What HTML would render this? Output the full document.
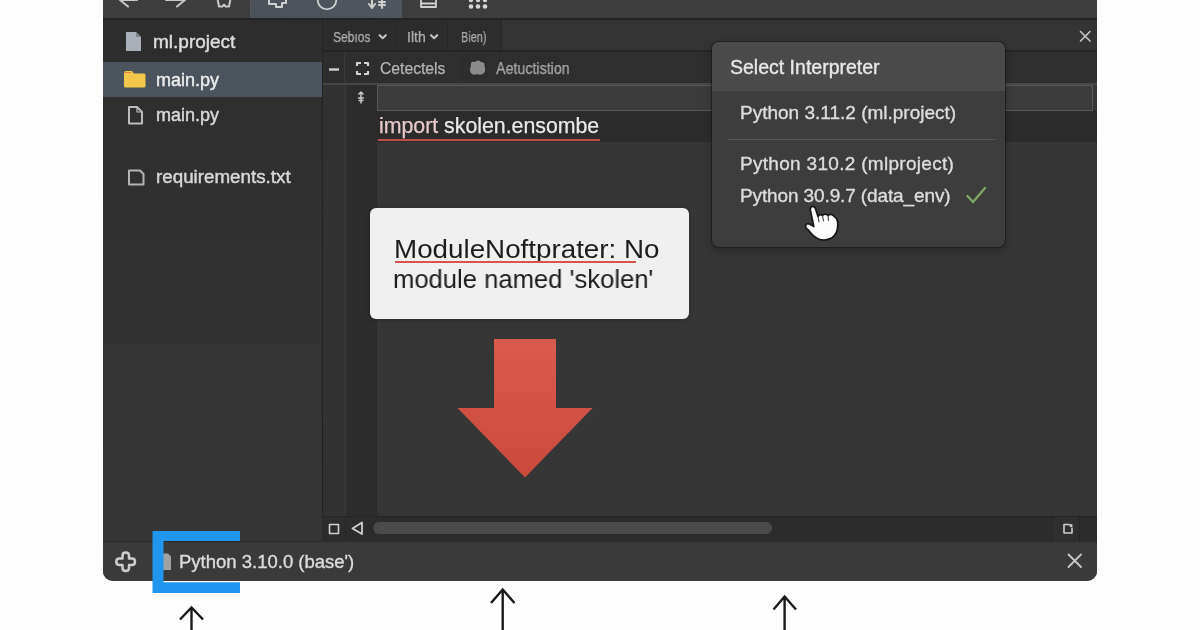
<!DOCTYPE html>
<html><head><meta charset="utf-8">
<style>
*{margin:0;padding:0;box-sizing:border-box}
html,body{width:1200px;height:630px;overflow:hidden;background:#fdfdfd;font-family:"Liberation Sans",sans-serif}
.a{position:absolute}
.t{position:absolute;white-space:nowrap;line-height:1;-webkit-text-stroke:.25px currentColor;will-change:transform}
</style></head><body>
<!-- window body -->
<div class="a" style="left:103px;top:-10px;width:994px;height:591px;background:#303030;border-radius:0 0 10px 10px;overflow:hidden">
  <!-- toolbar -->
  <div class="a" style="left:0;top:0;width:995px;height:29px;background:#3d3d3d"></div>
  <div class="a" style="left:147px;top:0;width:152px;height:29px;background:linear-gradient(90deg,#4b525a,#4f565e)"></div>
  <div class="a" style="left:0;top:28px;width:995px;height:2px;background:#242424"></div>
  <!-- sidebar -->
  <div class="a" style="left:0;top:30px;width:219px;height:521px;background:linear-gradient(#2d2d2d,#313131 40%,#363636)"></div>
  <div class="a" style="left:0;top:72px;width:219px;height:35px;background:#4b535c"></div>
  <div class="a" style="left:219px;top:30px;width:1px;height:521px;background:#232323"></div>
  <!-- tab bar -->
  <div class="a" style="left:220px;top:30px;width:775px;height:31px;background:#343434"></div>
  <div class="a" style="left:220px;top:30px;width:74px;height:31px;background:#2c2c2c;border-right:1px solid #262626"></div>
  <div class="a" style="left:294px;top:30px;width:51px;height:31px;background:#2c2c2c;border-right:1px solid #262626"></div>
  <div class="a" style="left:345px;top:30px;width:54px;height:31px;background:#2d2d2d;border-right:1px solid #262626"></div>
  <div class="a" style="left:220px;top:60px;width:775px;height:2px;background:#242424"></div>
  <!-- editor toolbar -->
  <div class="a" style="left:220px;top:62px;width:775px;height:32px;background:#2e2e2e"></div>
  <div class="a" style="left:220px;top:62px;width:22px;height:32px;background:#2d2d2d;border-right:1px solid #383838"></div>
  <div class="a" style="left:354px;top:63px;width:1px;height:30px;background:#333"></div>
  <div class="a" style="left:220px;top:93px;width:775px;height:2px;background:#474747"></div>
  <!-- gutter -->
  <div class="a" style="left:220px;top:95px;width:22px;height:431px;background:#323232"></div>
  <div class="a" style="left:242px;top:95px;width:1px;height:431px;background:#3a3a3a"></div>
  <div class="a" style="left:243px;top:95px;width:31px;height:431px;background:#2c2c2c"></div>
  <!-- editor area -->
  <div class="a" style="left:274px;top:95px;width:721px;height:431px;background:#363636"></div>
  <div class="a" style="left:274px;top:120px;width:721px;height:32px;background:#2b2b2b"></div>
  <div class="a" style="left:274px;top:95px;width:716px;height:26px;background:#3b3b3b;border:1px solid #585858"></div>
  <!-- scroll row -->
  <div class="a" style="left:219px;top:526px;width:776px;height:25px;background:#2c2c2c;border-top:1px solid #252525"></div>
  <div class="a" style="left:949px;top:527px;width:27px;height:24px;background:#2f2f2f"></div>
  <div class="a" style="left:242px;top:527px;width:1px;height:24px;background:#262626"></div>
  <div class="a" style="left:949px;top:527px;width:1px;height:24px;background:#262626"></div>
  <div class="a" style="left:976px;top:527px;width:1px;height:24px;background:#262626"></div>
  <div class="a" style="left:270px;top:532px;width:399px;height:12px;border-radius:6px;background:#4a4a4a"></div>
  <!-- status bar -->
  <div class="a" style="left:0;top:551px;width:995px;height:40px;background:#3a3a3a;border-top:1px solid #2a2a2a"></div>
</div>

<!-- sidebar texts -->
<div class="t" style="left:153px;top:32px;font-size:19px;color:#dedede;-webkit-text-stroke:.45px #dedede">ml.project</div>
<div class="t" style="left:156px;top:71px;font-size:18px;color:#ebebeb;-webkit-text-stroke:.45px #ebebeb">main.py</div>
<div class="t" style="left:156px;top:106px;font-size:18px;color:#d8d8d8;-webkit-text-stroke:.45px #d8d8d8">main.py</div>
<div class="t" style="left:156px;top:168px;font-size:18.8px;color:#d8d8d8;-webkit-text-stroke:.45px #d8d8d8">requirements.txt</div>

<!-- tab texts -->
<div class="t" style="left:333px;top:30px;font-size:14px;color:#b0b0b0;transform:scaleX(.86);transform-origin:0 0">Sebıos</div>
<div class="t" style="left:407px;top:30px;font-size:14px;color:#b0b0b0">Ilth</div>
<div class="t" style="left:461px;top:30px;font-size:14px;color:#aaaaaa;transform:scaleX(.78);transform-origin:0 0">Bien)</div>
<div class="t" style="left:380px;top:60.5px;font-size:15.7px;color:#b4b4b4">Cetectels</div>
<div class="t" style="left:496px;top:61px;font-size:16px;color:#a8a8a8;transform:scaleX(.89);transform-origin:0 0">Aetuctistion</div>

<!-- code -->
<div class="t" style="left:379px;top:116px;font-size:21.3px;color:#e9e9e9"><span style="color:#e6c9c9">import</span> skolen.ensombe</div>
<div class="a" style="left:378px;top:138.5px;width:222px;height:2.5px;background:#bd4f4a"></div>

<!-- popup -->
<div class="a" style="left:712px;top:42px;width:293px;height:205px;background:#3d3d3d;border-radius:7px;box-shadow:0 0 0 1px rgba(20,20,20,.55),0 3px 8px rgba(0,0,0,.3);overflow:hidden">
  <div class="a" style="left:0;top:0;width:293px;height:49px;background:#4a4a4a"></div>
  <div class="a" style="left:16px;top:97px;width:267px;height:1px;background:#555"></div>
</div>
<div class="t" style="left:730px;top:58px;font-size:19.5px;color:#e8e8e8;-webkit-text-stroke:.35px currentColor">Select Interpreter</div>
<div class="t" style="left:740px;top:103px;font-size:19px;color:#dddddd;-webkit-text-stroke:.35px currentColor">Python 3.11.2 (ml.project)</div>
<div class="t" style="left:740px;top:154px;font-size:19px;color:#dddddd;letter-spacing:.3px;-webkit-text-stroke:.35px currentColor">Python 310.2 (mlproject)</div>
<div class="t" style="left:740px;top:186px;font-size:19px;color:#dddddd;letter-spacing:-.12px;-webkit-text-stroke:.35px currentColor">Python 30.9.7 (data_env)</div>

<!-- tooltip -->
<div class="a" style="left:370px;top:208px;width:319px;height:111px;background:#f0f0f0;border-radius:6px;box-shadow:0 1px 4px rgba(0,0,0,.25)"></div>
<div class="t" style="left:394px;top:236px;font-size:26px;color:#1c1c1c;-webkit-text-stroke:0;transform:scaleX(1.068);transform-origin:0 0">ModuleNoftprater: No</div>
<div class="t" style="left:393px;top:265.5px;font-size:26px;color:#1c1c1c;-webkit-text-stroke:0;transform:scaleX(.985);transform-origin:0 0">module named 'skolen'</div>
<div class="a" style="left:395px;top:261px;width:241px;height:2px;background:#d9534f"></div>

<div class="t" style="left:179px;top:553px;font-size:18.5px;color:#dddddd;-webkit-text-stroke:.35px currentColor">Python 3.10.0 (base')</div>

<!-- icons overlay -->
<svg class="a" style="left:0;top:0" width="1200" height="630" fill="none" stroke-linecap="round" stroke-linejoin="round">
  <!-- toolbar: back / forward / home -->
  <g stroke="#c8c8c8" stroke-width="2">
    <path d="M137,0 H120 M120,0 L128,6.5"/>
    <path d="M166,0 H185 M185,0 L177,6.5"/>
    <path d="M217.5,-1 L219,6.5 H222.3 L224,4.6 L225.7,6.5 H229 L230.5,-1"/>
  </g>
  <line x1="250.5" y1="0" x2="250.5" y2="12" stroke="#5a5a5a" stroke-width="1"/>
  <!-- puzzle -->
  <g stroke="#d0d0d0" stroke-width="2">
    <path d="M269,-2 V4 H276 V7 H282 V3 H286 V-2"/>
  </g>
  <circle cx="327" cy="0" r="9.3" stroke="#cfcfcf" stroke-width="1.8"/>
  <path d="M324,-2 L330,-1" stroke="#888" stroke-width="1"/>
  <!-- arrows -->
  <g stroke="#d0d0d0" stroke-width="2">
    <path d="M372,-2 V8 M369,4 L372,8 L375,4"/>
    <path d="M382,-2 V8 M379,2 H385 M379,5 H385"/>
  </g>
  <!-- window icon -->
  <g stroke="#d0d0d0" stroke-width="1.8">
    <path d="M421,-2 V7 H436 V-2 M421,3.5 H436"/>
  </g>
  <!-- dots -->
  <g fill="#d8d8d8">
    <circle cx="471" cy="0" r="2.2"/><circle cx="478" cy="0" r="2.2"/><circle cx="485" cy="0" r="2.2"/>
    <circle cx="471" cy="6.5" r="2.3"/><circle cx="478" cy="6.5" r="2.3"/><circle cx="485" cy="6.5" r="2.3"/>
  </g>

  <!-- sidebar icons -->
  <path d="M126,32 H136 L141,37 V51 H126 Z" fill="#a9b0ba"/>
  <path d="M136,32 V37 H141" fill="#7d848c"/>
  <path d="M124,73 Q124,71 126,71 H132 L134,73.5 H144 Q145.5,73.5 145.5,75 V86 Q145.5,87.5 144,87.5 H125.5 Q124,87.5 124,86 Z" fill="#f3c74b"/>
  <path d="M125,72.5 H131" stroke="#e0803a" stroke-width="1"/>
  <path d="M129,107 H137 L142,112 V123.5 H129 Z" stroke="#bdbdbd" stroke-width="2"/>
  <path d="M137,107 V112 H142" stroke="#bdbdbd" stroke-width="1.2"/>
  <path d="M129,170.5 H140 L143.5,174 V184.5 H129 Z" stroke="#b5b5b5" stroke-width="2"/>

  <!-- tab chevrons -->
  <path d="M379.6,35.2 L382.7,38.2 L385.8,35.2" stroke="#c4c4c4" stroke-width="2.1"/>
  <path d="M431,35.2 L434.1,38.2 L437.2,35.2" stroke="#c4c4c4" stroke-width="2.1"/>
  <!-- tab close X -->
  <path d="M1080.5,31.5 L1090,41 M1090,31.5 L1080.5,41" stroke="#c8c8c8" stroke-width="1.6"/>

  <!-- editor toolbar icons -->
  <path d="M329,69.5 H339" stroke="#d2d2d2" stroke-width="2.4" stroke-linecap="butt"/>
  <g stroke="#d0d0d0" stroke-width="2.2" stroke-linecap="butt">
    <path d="M357,66 V63 H361 M364,63 H368 V66 M357,71 V74 H361 M364,74 H368 V71"/>
  </g>
  <path d="M471,66 Q470,61 475,62 Q478,59 481,62 Q485,62 484.5,66 Q486,70 484,73 Q481,76 477,74 Q473,76 471,73 Q469,70 471,66 Z" fill="#8c8c8c"/>
  <g stroke="#c8c8c8" stroke-width="1.5" stroke-linecap="butt">
    <path d="M361,92 V103.5 M358.5,94.5 L361,92 L363.5,94.5 M358,98 H364 M358.5,100.5 H363.5"/>
  </g>

  <!-- red arrow -->
  <defs><linearGradient id="rg" x1="0" y1="0" x2="0" y2="1"><stop offset="0" stop-color="#d95b4e"/><stop offset="1" stop-color="#ca4a3c"/></linearGradient></defs>
  <polygon points="494,339 556,339 556,408 592.5,408 525,477.5 457.5,408 494,408" fill="url(#rg)"/>

  <!-- checkmark -->
  <path d="M967.5,196 L973,202 L985,188" stroke="#7fa564" stroke-width="2.4"/>

  <!-- hand cursor -->
  <path d="M810.2,209.5 Q810.5,206.3 813,206.5 Q815.3,206.8 815.8,209.5 L818,216.5 Q820,213.2 822.5,215.5 Q825.3,212.8 828,215.5 Q831.5,213 834.3,216.5 Q837.8,218.5 837.8,224.5 Q837.8,233.5 832,237.8 Q826,241.3 819,239.3 Q812.8,236.5 808.3,230 Q804.8,227.8 805.5,225.3 Q806.5,222.8 810,224.3 L813.8,226.5 Z" fill="#fbfbfb" stroke="#151515" stroke-width="1.7"/>
  <path d="M818,216.5 L819,222 M822.5,215.5 L823.5,221 M828,215.5 L828.5,220.5" stroke="#333" stroke-width="1"/>
  <!-- scroll row icons -->
  <rect x="329.5" y="524.5" width="9" height="9" stroke="#cfcfcf" stroke-width="1.6"/>
  <path d="M362,522.5 V534 L352.5,528.5 Z" stroke="#d0d0d0" stroke-width="1.8"/>
  <path d="M1069,524.5 H1064 V533 H1072 V528" stroke="#cfcfcf" stroke-width="1.6"/>
  <circle cx="1071" cy="525.5" r="1.6" fill="#cfcfcf"/>

  <!-- status bar -->
  <path d="M122.5,555.5 Q122.5,552.5 125.8,552.5 Q129,552.5 129,555.5 V558.5 H132 Q135,558.5 135,561.7 Q135,565 132,565 H129 V568 Q129,571 125.8,571 Q122.5,571 122.5,568 V565 H119.5 Q116.3,565 116.3,561.7 Q116.3,558.5 119.5,558.5 H122.5 Z" stroke="#cdcdcd" stroke-width="2.5"/>
  <path d="M157,553.5 H168 L171,556.5 V570 H157 Z" fill="#c4c4c4" opacity=".75"/>
  <path d="M1068.5,554.5 L1081,567 M1081,554.5 L1068.5,567" stroke="#c8c8c8" stroke-width="1.8"/>

  <!-- blue bracket -->
  <path d="M240,531 H152.5 V593 H240 V582.3 H163.5 V541 H240 Z" fill="#2196ee"/>

  <!-- bottom arrows -->
  <g stroke="#1a1a1a" stroke-width="2.4" stroke-linecap="butt" stroke-linejoin="miter">
    <path d="M191.5,607.5 V632 M180,619.5 L191.5,607.5 L203,619.5"/>
    <path d="M502.7,589.5 V632 M491,603 L502.7,589.5 L514.5,603"/>
    <path d="M784.6,596.5 V632 M773.5,609.5 L784.6,596.5 L796,609.5"/>
  </g>
</svg>
</body></html>
